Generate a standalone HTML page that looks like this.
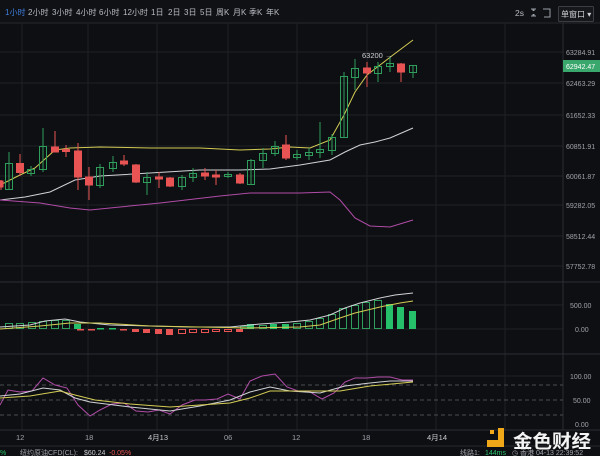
<!DOCTYPE html>
<html><head><meta charset="utf-8"><style>
body{margin:0;width:600px;height:456px;background:#0e0f12;overflow:hidden;font-family:"Liberation Sans","Noto Sans CJK SC",sans-serif;}
svg{position:absolute;left:0;top:0}
</style></head><body>
<svg width="600" height="456" viewBox="0 0 600 456" font-family="Liberation Sans, Noto Sans CJK SC, sans-serif">
<rect width="600" height="456" fill="#0e0f12"/>
<!-- top bar -->
<rect x="0" y="0" width="600" height="23" fill="#101114"/>
<line x1="0" y1="23" x2="600" y2="23" stroke="#26282d"/>
<g font-size="8" fill="#b8bcc4">
<text x="5" y="15" fill="#3f7fe0">1小时</text><text x="28" y="15">2小时</text><text x="52" y="15">3小时</text><text x="76" y="15">4小时</text><text x="99" y="15">6小时</text><text x="123" y="15">12小时</text><text x="151" y="15">1日</text><text x="168" y="15">2日</text><text x="184" y="15">3日</text><text x="200" y="15">5日</text><text x="216" y="15">周K</text><text x="233" y="15">月K</text><text x="249" y="15">季K</text><text x="266" y="15">年K</text>
<text x="515" y="16" font-size="8.5">2s</text>
</g>
<g stroke="#9aa0a8" stroke-width="1" fill="none">
<path d="M531 9h2v2M536 9h-2v2M531 16h2v-2M536 16h-2v-2"/>
<path d="M543 9h7v8h-6"/>
</g>
<rect x="558.5" y="6.5" width="35" height="15" fill="#15171b" stroke="#3a3d44" rx="1"/>
<text x="561" y="17" font-size="8" fill="#d0d3d8">单窗口 ▾</text>
<!-- grid -->
<g stroke="#1f2126" stroke-width="1">
<line x1="22" y1="23" x2="22" y2="430"/><line x1="88" y1="23" x2="88" y2="430"/><line x1="157" y1="23" x2="157" y2="430"/><line x1="228" y1="23" x2="228" y2="430"/><line x1="297" y1="23" x2="297" y2="430"/><line x1="367" y1="23" x2="367" y2="430"/><line x1="436" y1="23" x2="436" y2="430"/><line x1="505" y1="23" x2="505" y2="430"/>
<line x1="0" y1="52" x2="563" y2="52"/><line x1="0" y1="83" x2="563" y2="83"/><line x1="0" y1="115" x2="563" y2="115"/><line x1="0" y1="146" x2="563" y2="146"/><line x1="0" y1="176" x2="563" y2="176"/><line x1="0" y1="205" x2="563" y2="205"/><line x1="0" y1="236" x2="563" y2="236"/><line x1="0" y1="266" x2="563" y2="266"/>
<line x1="0" y1="305" x2="563" y2="305"/><line x1="0" y1="329" x2="563" y2="329"/><line x1="0" y1="376" x2="563" y2="376"/>
</g>
<g stroke="#2c2e34"><line x1="0" y1="282" x2="600" y2="282"/><line x1="0" y1="354" x2="600" y2="354"/><line x1="0" y1="430" x2="600" y2="430"/><line x1="563" y1="23" x2="563" y2="430"/></g>
<g stroke="#4a4c52" stroke-dasharray="4,3"><line x1="0" y1="385" x2="563" y2="385"/><line x1="0" y1="400" x2="563" y2="400"/><line x1="0" y1="415" x2="563" y2="415"/></g>
<!-- right labels -->
<g font-size="7" fill="#9ea2aa">
<text x="566" y="55">63284.91</text><text x="566" y="86">62463.29</text><text x="566" y="118">61652.33</text><text x="566" y="149">60851.91</text><text x="566" y="179">60061.87</text><text x="566" y="208">59282.05</text><text x="566" y="239">58512.44</text><text x="566" y="269">57752.78</text>
<text x="570" y="308">500.00</text><text x="575" y="332">0.00</text><text x="570" y="379">100.00</text><text x="573" y="403">50.00</text><text x="575" y="427">0.00</text>
</g>
<rect x="563" y="60" width="37" height="12" fill="#3aa76d"/>
<text x="566" y="69" font-size="7" fill="#fff">62942.47</text>
<!-- MA lines -->
<g fill="none" stroke-width="1">
<polyline stroke="#d4cc55" points="0,185 20,175 35,168 55,150 70,148 100,147 150,148 200,148 240,150 270,149 290,147 310,148 330,140 344,115 355,92 367,75 380,65 393,55 413,40"/>
<polyline stroke="#d0d2d6" points="0,200 25,197 50,192 75,180 100,176 150,173 200,170 240,170 270,169 300,165 330,160 345,152 360,145 375,142 390,138 413,128"/>
<polyline stroke="#b04ca8" points="0,200 40,203 70,208 90,210 120,207 160,203 220,196 250,193 300,193 330,192 340,200 355,218 370,226 390,227 413,220"/>
</g>
<!-- candles -->
<g stroke-width="1">
<g stroke="#2f9e5c" fill="none">
<line x1="9" y1="152" x2="9" y2="190"/><rect x="5.5" y="163.5" width="7" height="26"/>
<line x1="31" y1="166" x2="31" y2="176"/><rect x="27.5" y="169.5" width="7" height="4"/>
<line x1="43" y1="128" x2="43" y2="172"/><rect x="39.5" y="146.5" width="7" height="23"/>
<line x1="100" y1="164" x2="100" y2="188"/><rect x="96.5" y="167.5" width="7" height="18"/>
<line x1="113" y1="156" x2="113" y2="172"/><rect x="109.5" y="162.5" width="7" height="6"/>
<line x1="147" y1="172" x2="147" y2="195"/><rect x="143.5" y="177.5" width="7" height="5"/>
<line x1="182" y1="175" x2="182" y2="190"/><rect x="178.5" y="177.5" width="7" height="9"/>
<line x1="193" y1="168" x2="193" y2="182"/><rect x="189.5" y="173.5" width="7" height="4"/>
<line x1="228" y1="172" x2="228" y2="178"/><rect x="224.5" y="174.5" width="7" height="2"/>
<line x1="251" y1="159" x2="251" y2="185"/><rect x="247.5" y="160.5" width="7" height="24"/>
<line x1="263" y1="148" x2="263" y2="168"/><rect x="259.5" y="153.5" width="7" height="7"/>
<line x1="275" y1="141" x2="275" y2="156"/><rect x="271.5" y="146.5" width="7" height="7"/>
<line x1="297" y1="150" x2="297" y2="160"/><rect x="293.5" y="154.5" width="7" height="3"/>
<line x1="309" y1="148" x2="309" y2="160"/><rect x="305.5" y="152.5" width="7" height="3"/>
<line x1="320" y1="122" x2="320" y2="158"/><rect x="316.5" y="149.5" width="7" height="3"/>
<line x1="332" y1="134" x2="332" y2="155"/><rect x="328.5" y="137.5" width="7" height="13"/>
<line x1="344" y1="72" x2="344" y2="137"/><rect x="340.5" y="76.5" width="7" height="61"/>
<line x1="355" y1="59" x2="355" y2="90"/><rect x="351.5" y="68.5" width="7" height="9"/>
<line x1="378" y1="62" x2="378" y2="82"/><rect x="374.5" y="66.5" width="7" height="7"/>
<line x1="390" y1="57" x2="390" y2="72"/><rect x="386.5" y="63.5" width="7" height="3"/>
<line x1="413" y1="65" x2="413" y2="78"/><rect x="409.5" y="65.5" width="7" height="7"/>
</g>
<g stroke="#e85454" fill="#e85454">
<line x1="1" y1="180" x2="1" y2="190"/><rect x="-3" y="181" width="6" height="6"/>
<line x1="20" y1="154" x2="20" y2="176"/><rect x="16.5" y="163.5" width="7" height="9"/>
<line x1="55" y1="131" x2="55" y2="152"/><rect x="51.5" y="147" width="7" height="5"/>
<line x1="66" y1="145" x2="66" y2="157"/><rect x="62.5" y="149.5" width="7" height="2"/>
<line x1="78" y1="143" x2="78" y2="190"/><rect x="74.5" y="151" width="7" height="26"/>
<line x1="89" y1="167" x2="89" y2="200"/><rect x="85.5" y="177" width="7" height="8"/>
<line x1="124" y1="155" x2="124" y2="166"/><rect x="120.5" y="161" width="7" height="3"/>
<line x1="136" y1="164" x2="136" y2="183"/><rect x="132.5" y="165" width="7" height="17"/>
<line x1="159" y1="172" x2="159" y2="188"/><rect x="155.5" y="177" width="7" height="2"/>
<line x1="170" y1="177" x2="170" y2="187"/><rect x="166.5" y="178" width="7" height="8"/>
<line x1="205" y1="168" x2="205" y2="180"/><rect x="201.5" y="173" width="7" height="3"/>
<line x1="216" y1="170" x2="216" y2="185"/><rect x="212.5" y="175" width="7" height="2"/>
<line x1="240" y1="173" x2="240" y2="184"/><rect x="236.5" y="175" width="7" height="8"/>
<line x1="286" y1="135" x2="286" y2="160"/><rect x="282.5" y="145" width="7" height="13"/>
<line x1="367" y1="62" x2="367" y2="87"/><rect x="363.5" y="68" width="7" height="5"/>
<line x1="401" y1="63" x2="401" y2="82"/><rect x="397.5" y="64" width="7" height="8"/>
</g>
</g>
<text x="362" y="58" font-size="7.5" fill="#d0d2d6">63200 →</text>
<!-- volume -->
<g stroke="#2f9e5c" fill="none">
<rect x="5.5" y="323.5" width="7" height="5"/><rect x="16.5" y="323.5" width="7" height="5"/><rect x="28.5" y="322.5" width="7" height="6"/><rect x="39.5" y="321.5" width="7" height="7"/><rect x="51.5" y="320.5" width="7" height="8"/><rect x="62.5" y="320.5" width="7" height="8"/>
<rect x="293.5" y="323.5" width="7" height="5"/><rect x="305.5" y="321.5" width="7" height="7"/><rect x="316.5" y="318.5" width="7" height="10"/><rect x="328.5" y="314.5" width="7" height="14"/><rect x="339.5" y="308.5" width="7" height="20"/><rect x="351.5" y="305.5" width="7" height="23"/><rect x="362.5" y="302.5" width="7" height="26"/><rect x="374.5" y="300.5" width="7" height="28"/>
<rect x="240.5" y="326.5" width="7" height="2"/><rect x="259.5" y="325.5" width="7" height="3"/>
</g>
<g fill="#27c06a">
<rect x="74" y="324" width="7" height="5"/><rect x="247" y="324" width="7" height="5"/><rect x="270" y="324" width="7" height="5"/><rect x="282" y="324" width="7" height="5"/><rect x="386" y="304" width="7" height="25"/><rect x="397" y="307" width="7" height="22"/><rect x="409" y="311" width="7" height="18"/>
<rect x="97" y="328" width="7" height="1.5"/><rect x="109" y="328" width="7" height="1.5"/>
</g>
<g fill="#e85454">
<rect x="77" y="329" width="7" height="1.5"/><rect x="88" y="329" width="7" height="1.5"/><rect x="120" y="329" width="7" height="1.5"/><rect x="132" y="329" width="7" height="3"/><rect x="143" y="329" width="7" height="4"/><rect x="155" y="329" width="7" height="5"/><rect x="166" y="329" width="7" height="6"/><rect x="236" y="329" width="7" height="3"/>
</g>
<g stroke="#e85454" fill="none"><rect x="178.5" y="329.5" width="7" height="4"/><rect x="189.5" y="329.5" width="7" height="3"/><rect x="201.5" y="329.5" width="7" height="3"/><rect x="212.5" y="329.5" width="7" height="2"/><rect x="224.5" y="329.5" width="7" height="2"/></g>
<g fill="none">
<polyline stroke="#d0d2d6" points="0,327 30,325 45,321 65,319 80,322 110,325 150,326 190,327 230,327 260,324 290,322 310,320 330,315 345,308 360,303 380,298 395,295 413,293"/>
<polyline stroke="#d4cc55" points="0,329 40,326 70,323 100,323 150,326 200,327 250,328 300,327 320,325 340,318 355,313 380,307 400,303 413,301"/>
</g>
<!-- KDJ -->
<g fill="none">
<polyline stroke="#b04ca8" points="0,405 8,390 20,392 32,391 43,378 55,385 67,388 78,405 90,416 100,410 112,404 124,403 136,411 148,412 159,410 170,414 182,405 195,400 205,400 217,399 228,394 240,399 250,381 262,376 275,374 287,387 298,391 310,392 322,399 334,393 345,382 355,378 367,378 378,377 390,377 402,380 413,380"/>
<polyline stroke="#d0d2d6" points="0,396 20,394 43,388 60,390 75,398 90,402 130,407 170,411 200,406 230,400 250,392 270,387 290,391 320,393 345,386 370,383 390,381 413,381"/>
<polyline stroke="#d4cc55" points="0,398 30,396 60,391 75,395 95,400 130,404 170,407 230,403 250,398 270,391 310,391 340,391 370,386 413,382"/>
</g>
<!-- x labels -->
<g font-size="7.5" fill="#9ea2aa">
<text x="16" y="440">12</text><text x="85" y="440">18</text><text x="148" y="440" fill="#c8cbd0">4月13</text><text x="224" y="440">06</text><text x="292" y="440">12</text><text x="362" y="440">18</text><text x="427" y="440" fill="#c8cbd0">4月14</text>
</g>
<!-- bottom bar -->
<rect x="0" y="446" width="600" height="10" fill="#0e0f12"/>
<line x1="0" y1="446" x2="600" y2="446" stroke="#26282d"/>
<g font-size="7">
<text x="0" y="455" fill="#27c06a">%</text>
<text x="20" y="455" fill="#9ea2aa">纽约原油CFD(CL):</text><text x="84" y="455" fill="#c8cbd0">$60.24</text><text x="109" y="455" fill="#e85454">-0.05%</text>
<text x="460" y="455" fill="#9ea2aa">线路1:</text><text x="485" y="455" fill="#27c06a">144ms</text>
<text x="512" y="455" fill="#9ea2aa">◷ 香港 04-13 22:39:52</text>
</g>
<!-- logo -->
<path d="M498 428h6v19h-17v-7h11z" fill="#f0a818"/>
<rect x="490" y="430" width="4" height="4" fill="#f0a818"/>
<text x="513" y="448" font-size="18.5" font-weight="bold" fill="#f4f4f4" textLength="78" lengthAdjust="spacingAndGlyphs">金色财经</text>
</svg>
</body></html>
